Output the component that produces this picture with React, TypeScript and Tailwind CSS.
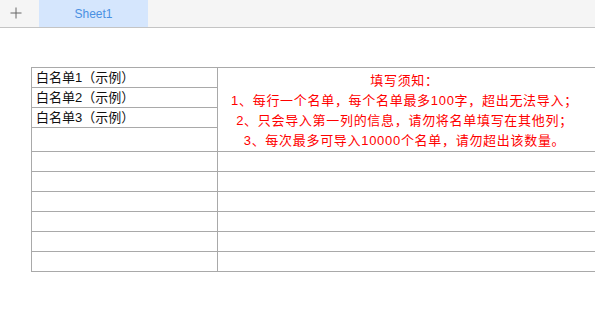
const FONT = "font-['Liberation_Sans','Noto_Sans_CJK_SC',sans-serif]";

const samples = ["白名单1（示例）", "白名单2（示例）", "白名单3（示例）"];

const notes = [
  "填写须知：",
  "1、每行一个名单，每个名单最多100字，超出无法导入；",
  "2、只会导入第一列的信息，请勿将名单填写在其他列；",
  "3、每次最多可导入10000个名单，请勿超出该数量。",
];

function PlusIcon() {
  return (
    <svg width="12" height="12" viewBox="0 0 12 12" fill="none" aria-hidden>
      <path d="M6 0.5v11M0.5 6h11" stroke="#666" strokeWidth="1" />
    </svg>
  );
}

export default function App() {
  return (
    <div className={`${FONT} h-[328px] w-[595px] overflow-hidden bg-white`}>
      <div className="flex h-[28px] items-stretch border-b border-[#c4c4c4] bg-[#f5f5f5]">
        <div className="flex w-[39px] items-center pb-[1px] pl-[10px]">
          <PlusIcon />
        </div>
        <div className="flex w-[109px] items-center justify-center bg-[#d5e6fd] text-[12px] text-[#4a90e2]">
          Sheet1
        </div>
      </div>

      <div className="ml-[31px] mt-[39px] w-[566px] border-l border-t border-[#a9a9a9] text-[13px]">
        <div className="flex">
          <div className="w-[186px] shrink-0">
            {samples.map((s) => (
              <div
                key={s}
                className="h-[20px] border-b border-r border-[#a9a9a9] pl-[4px] leading-[19px] text-[#111]"
              >
                {s}
              </div>
            ))}
            <div className="h-[24px] border-b border-r border-[#a9a9a9]" />
          </div>
          <div className="h-[84px] flex-1 border-b border-r border-[#a9a9a9] pt-[3px] pr-[5px] text-center tracking-[0.7px] text-[#ff0000]">
            {notes.map((n) => (
              <div key={n} className="h-[20px] leading-[20px]">
                {n}
              </div>
            ))}
          </div>
        </div>
        {Array.from({ length: 6 }).map((_, i) => (
          <div key={i} className="flex h-[20px]">
            <div className="w-[186px] shrink-0 border-b border-r border-[#a9a9a9]" />
            <div className="flex-1 border-b border-r border-[#a9a9a9]" />
          </div>
        ))}
      </div>
    </div>
  );
}
